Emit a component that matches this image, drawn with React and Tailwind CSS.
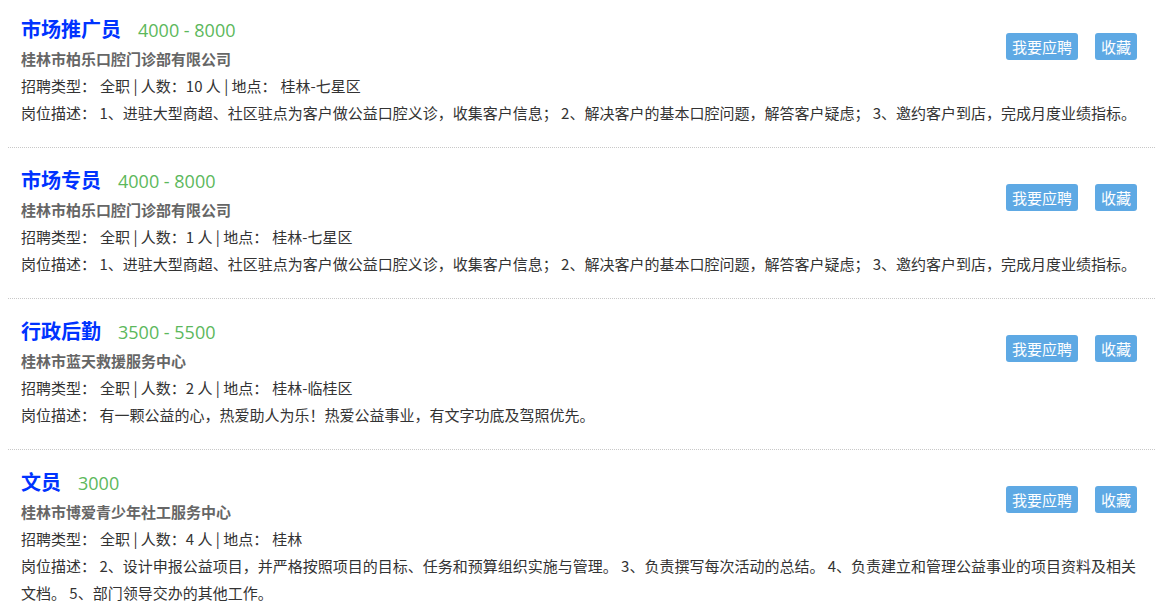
const jobs = [
  {
    title: '市场推广员',
    salary: '4000 - 8000',
    company: '桂林市柏乐口腔门诊部有限公司',
    type: '全职',
    count: '10',
    place: '桂林-七星区',
    desc: '1、进驻大型商超、社区驻点为客户做公益口腔义诊，收集客户信息； 2、解决客户的基本口腔问题，解答客户疑虑； 3、邀约客户到店，完成月度业绩指标。',
  },
  {
    title: '市场专员',
    salary: '4000 - 8000',
    company: '桂林市柏乐口腔门诊部有限公司',
    type: '全职',
    count: '1',
    place: '桂林-七星区',
    desc: '1、进驻大型商超、社区驻点为客户做公益口腔义诊，收集客户信息； 2、解决客户的基本口腔问题，解答客户疑虑； 3、邀约客户到店，完成月度业绩指标。',
  },
  {
    title: '行政后勤',
    salary: '3500 - 5500',
    company: '桂林市蓝天救援服务中心',
    type: '全职',
    count: '2',
    place: '桂林-临桂区',
    desc: '有一颗公益的心，热爱助人为乐！热爱公益事业，有文字功底及驾照优先。',
  },
  {
    title: '文员',
    salary: '3000',
    company: '桂林市博爱青少年社工服务中心',
    type: '全职',
    count: '4',
    place: '桂林',
    desc: '2、设计申报公益项目，并严格按照项目的目标、任务和预算组织实施与管理。 3、负责撰写每次活动的总结。 4、负责建立和管理公益事业的项目资料及相关文档。 5、部门领导交办的其他工作。',
  },
];

function JobItem({ job }) {
  return (
    <div className="border-b border-dotted border-[#c8c8c8] pl-[13px] pr-[14px] pt-[17px] pb-[21px]">
      <div className="flex items-start">
        <div className="flex-1">
          <div className="flex items-baseline h-[30px] leading-[30px]">
            <span className="text-[20px] font-bold text-[#0033ff]">{job.title}</span>
            <span
              className="ml-[17px] text-[18px] text-[#5cb85c]"
              style={{ fontFamily: '"Open Sans", "Liberation Sans", sans-serif' }}
            >
              {job.salary}
            </span>
          </div>
          <div className="mt-[2px] leading-[26px] text-[15px] font-bold text-[#666]">{job.company}</div>
          <div className="leading-[27px] text-[15px] text-[#333]">
            招聘类型：<span className="ml-[4px]">{job.type}</span> | 人数：{job.count} 人 | 地点：
            <span className="ml-[4px]">{job.place}</span>
          </div>
        </div>
        <div className="flex gap-[17px] mt-[19px] mr-[4px]">
          <button className="h-[27px] px-[6px] rounded-[3px] bg-[#5ea9e4] text-white text-[15px] leading-[27px]">
            我要应聘
          </button>
          <button className="h-[27px] px-[6px] rounded-[3px] bg-[#5ea9e4] text-white text-[15px] leading-[27px]">
            收藏
          </button>
        </div>
      </div>
      <div className="leading-[27px] text-[15px] text-[#333]">岗位描述：&nbsp;{job.desc}</div>
    </div>
  );
}

export default function App() {
  return (
    <div
      className="w-[1160px] h-[609px] overflow-hidden bg-white"
      style={{ fontFamily: '"Noto Sans CJK SC", "Liberation Sans", sans-serif' }}
    >
      <div className="ml-[8px] mr-[5px] -mt-[3px]">
        {jobs.map((job) => (
          <JobItem key={job.title} job={job} />
        ))}
      </div>
    </div>
  );
}
